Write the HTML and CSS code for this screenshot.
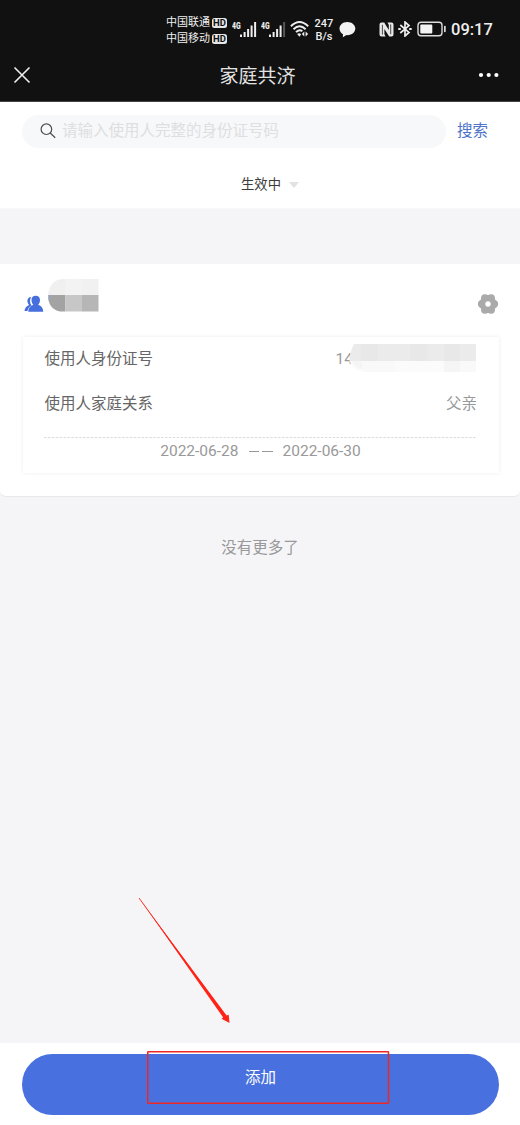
FILE: index.html
```html
<!DOCTYPE html>
<html lang="zh-CN">
<head>
<meta charset="utf-8">
<title>家庭共济</title>
<link rel="stylesheet" href="styles.css">
</head>
<body>
<div class="screen">
  <header class="top">
    <div class="status">
      <div class="carriers">
        <div class="carrier">中国联通<span class="hd">HD</span></div>
        <div class="carrier">中国移动<span class="hd">HD</span></div>
      </div>
      <div class="signal">
        <span class="net"><b>4G</b></span>
        <svg width="17" height="17" viewBox="0 0 17 17" fill="#eee"><rect x="0" y="13.5" width="2" height="2.5"/><rect x="3.6" y="11" width="2" height="5"/><rect x="7.1" y="8" width="2" height="8"/><rect x="10.6" y="4.5" width="2" height="11.5"/><rect x="14.1" y="1" width="2" height="15"/></svg>
      </div>
      <div class="signal second">
        <span class="net"><b>4G</b></span>
        <svg width="17" height="17" viewBox="0 0 17 17" fill="#eee"><rect x="0" y="13.5" width="2" height="2.5"/><rect x="3.6" y="11" width="2" height="5"/><rect x="7.1" y="8" width="2" height="8"/><rect x="10.6" y="4.5" width="2" height="11.5"/><rect x="14.1" y="1" width="2" height="15" fill="#555"/></svg>
      </div>
      <svg class="wifi" width="20" height="18" viewBox="0 0 20 18" fill="none" stroke="#eee" stroke-width="1.9"><path d="M.9 6.2Q9.5-2.2 18.2 6.2M3.5 9.2Q9.5 3.3 15.6 9.2M6 12.2Q9.5 8.7 12.3 11.3"/><path d="M9.500 16.700l-2.400-2.600q2.200-1.700 4 .1z" fill="#eee" stroke="none"/><path d="M14.300 11.600v5l-2.500-2.500zM15.600 11.600v5l2.500-2.500z" fill="#eee" stroke="none"/></svg>
      <div class="speed"><span>247</span><span>B/s</span></div>
      <svg class="bubble" width="17" height="17" viewBox="0 0 17 17" fill="#f2f2f2"><path d="M8.300 1C3.700 1 .5 3.900.5 7.600c0 2.500 1.500 4.600 3.500 5.700L3.800 16.300l3.800-2.200c5 .4 8.700-2.600 8.700-6.500C16.300 3.900 12.900 1 8.300 1z"/></svg>
      <svg class="nfc" width="15" height="15" viewBox="0 0 15 15"><path d="M2.500.5H5.200L9.800 8V3L8.500.5H12.500q2 0 2 2v10q0 2-2 2H10.200L5.400 7V12.200L6.600 14.500H2.500q-2 0-2-2v-10q0-2 2-2z" fill="#e8e8e8"/><path d="M3.400 2.800V12.600M11.700 2.400V12.200" stroke="#222" stroke-width=".8"/></svg>
      <svg class="bt" width="14" height="16" viewBox="0 0 14 16" fill="none" stroke="#eee" stroke-width="1.700"><path d="M2.300 4L11 11.400 7 15V1L11 4.600 2.300 12"/><path d="M.3 8h2.500M11.200 8h2.500" stroke-width="1.900"/></svg>
      <svg class="battery" width="30" height="16" viewBox="0 0 30 16" fill="none"><rect x="1" y="1.200" width="24" height="13.600" rx="3" stroke="#ddd" stroke-width="1.400"/><rect x="3.300" y="3.500" width="12" height="9" rx="1" fill="#f4f4f4"/><rect x="27" y="4.800" width="1.700" height="6.500" rx=".8" fill="#ddd"/></svg>
      <time class="clock">09:17</time>
    </div>
    <div class="nav">
      <svg class="close" width="18" height="18" viewBox="0 0 18 18" stroke="#eee" stroke-width="1.600" fill="none"><path d="M1.500 1.500l15 15M16.500 1.500l-15 15"/></svg>
      <h1 class="title">家庭共济</h1>
      <svg class="more" width="22" height="6" viewBox="0 0 22 6" fill="#fff"><circle cx="3" cy="3" r="2.100"/><circle cx="10.700" cy="3" r="2.100"/><circle cx="18.400" cy="3" r="2.100"/></svg>
    </div>
  </header>
  <section class="filter">
    <div class="search-row">
      <div class="search-box">
        <svg width="16" height="16" viewBox="0 0 16 16" fill="none" stroke="#4c4c4c" stroke-width="1.200"><circle cx="6.400" cy="6.200" r="5.300"/><path d="M10.200 10l5 4.700"/></svg>
        <span>请输入使用人完整的身份证号码</span>
      </div>
      <a class="search-link">搜索</a>
    </div>
    <div class="state">生效中<i class="caret"></i></div>
  </section>
  <main class="content">
    <article class="card">
      <div class="card-head">
        <svg class="people" width="20" height="18" viewBox="0 0 20 18" fill="#456fdd"><path d="M6.800 2C4 2.200 3 4.500 3.500 7c.2 1.200.9 2.200 1.600 3C2.500 11.200.700 12.800.500 16h3C4 13.100 5.400 11.500 7.500 10.400 5.700 7.900 5.400 4.600 7.300 2z"/><path d="M11.700.800c2.800 0 4.500 2 4.300 4.600-.1 1.900-.9 3.300-1.900 4.300 3.300 1.100 5 3.300 5.200 7H4.200c.2-3.700 2-5.900 5.200-7-1.100-1-1.800-2.400-1.900-4.300C7.300 2.800 9 .800 11.700.800z"/></svg>
        <svg class="name-mask" width="52" height="34" viewBox="0 0 52 34"><defs><clipPath id="nm"><path d="M51.500 1v32.500H13Q1 31 1 17 3 1 17 1z"/></clipPath></defs><g clip-path="url(#nm)"><path fill="#f0f0f0" d="M0 1h19v16H0z"/><path fill="#f3f3f3" d="M18.500 1H35v16H18.500z"/><path fill="#f1f1f1" d="M35 1h17v16H35z"/><path fill="#a3a3a3" d="M0 17h18.500v17H0z"/><path fill="#c7c7c7" d="M18.500 17H35v17H18.500z"/><path fill="#b6b6b6" d="M35 17h17v17H35z"/><path fill="#9bb5f3" d="M0 17h2v5H0z"/></g></svg>
        <svg class="gear" width="22" height="20" viewBox="0 0 22 20"><g fill="#aaa"><circle cx="11" cy="10" r="8.600"/><circle cx="5" cy="10" r="4.200"/><circle cx="17" cy="10" r="4.200"/><circle cx="8" cy="4.300" r="4"/><circle cx="14" cy="4.300" r="4"/><circle cx="8" cy="15.700" r="4"/><circle cx="14" cy="15.700" r="4"/></g><circle cx="11" cy="10" r="2.700" fill="#fff"/></svg>
      </div>
      <div class="detail">
        <div class="row"><span>使用人身份证号</span><span class="value id">14<svg class="id-mask" width="128" height="29" viewBox="0 0 128 29"><path d="M5 0h122v28H16Q2 27 0 14z" fill="#fbfbfb"/><path fill="#ebebeb" d="M5 0h122v17H1Q0 10 5 0z"/><path fill="#e8e8e8" d="M12 0h17v17H12zM61 0h17v17H61zM95 0h16v17H95z"/><path fill="#f5f5f5" d="M95 17h16v11H95zM3 17h10v8Q5 24 3 17z"/><path fill="#f9f9f9" d="M13 17h33v11H16l-3-2zM111 17h16v11h-16z"/></svg></span></div>
        <div class="row"><span>使用人家庭关系</span><span class="value">父亲</span></div>
        <svg class="divider" width="433" height="1" viewBox="0 0 433 1"><path d="M0 .5h433" stroke="#dcdcdc" stroke-dasharray="2.600 1.300"/></svg>
        <div class="dates"><span>2022-06-28</span><span class="dash"><i></i><i></i></span><span>2022-06-30</span></div>
      </div>
    </article>
    <p class="end">没有更多了</p>
  </main>
  <footer class="footer"><button class="add">添加</button></footer>
  <svg class="arrow" width="94" height="128" viewBox="0 0 94 128"><path d="M1 1L88.600 118.500 90.700 117.800 91.500 126 83.500 121.800 85.200 120.600z" fill="#ff2416"/><path d="M1 1L87 119" stroke="#ff2416" stroke-width=".9"/></svg>
  <svg class="mark" width="243" height="54" viewBox="0 0 243 54" fill="none" stroke="#ed2824" stroke-width="1.500"><rect x=".75" y=".75" width="240.700" height="51.500" rx=".5"/></svg>
</div>
</body>
</html>
```
FILE: styles.css
```css
* { box-sizing: border-box; }
body { margin: 0; font-family: Roboto, "Noto Sans CJK SC", sans-serif; font-size: 15.5px; color: #666; }
svg { display: block; flex: none; }
.screen { position: relative; width: 520px; height: 1125px; display: flex; flex-direction: column; background: #f5f5f8; overflow: hidden; }

.top { height: 102px; flex: none; background: #111; border-bottom: 1px solid #444; color: #eee; }
.status { height: 50px; padding: 8px 0 0 166px; display: flex; align-items: center; }
.carriers { width: 66px; flex: none; padding-top: 3px; }
.carrier { display: flex; align-items: center; height: 16px; font-size: 11px; line-height: 16px; white-space: nowrap; }
.hd { margin-left: 2px; width: 15px; height: 10px; border-radius: 2.5px; background: #e6e6e6; color: #111; font-size: 9.5px; font-weight: 700; line-height: 10px; text-align: center; }
.signal { display: flex; width: 25px; flex: none; }
.signal.second { margin-left: 4px; }
.net { width: 8px; flex: none; font: 700 9.5px/9px Roboto, sans-serif; }
.net b { display: block; transform: scaleX(.72); transform-origin: 0 0; }
.wifi { margin-left: 4px; }
.speed { margin-left: 4px; width: 20px; display: flex; flex-direction: column; align-items: center; font-size: 11px; font-weight: 500; line-height: 13px; padding-top: 1px; }
.bubble { margin-left: 5px; }
.nfc { margin-left: 23px; }
.bt { margin-left: 4px; }
.battery { margin-left: 5px; }
.clock { margin-left: 4px; padding-top: 2px; font-size: 16.5px; font-weight: 500; line-height: 18px; }
.nav { height: 50px; padding: 0 20px 0 13px; display: flex; align-items: center; justify-content: space-between; }
.title { margin: 0; padding: 4px 0 0 6px; font-size: 19px; font-weight: 400; line-height: 28px; color: #e2e2e2; }

.filter { height: 107px; flex: none; background: #fff; border-bottom: 1px solid #f9f9fa; }
.search-row { display: flex; align-items: center; padding: 13px 0 0 22px; }
.search-box { width: 424px; height: 33px; border-radius: 17px; background: #f7f8fa; display: flex; align-items: center; gap: 6px; padding: 0 0 1px 18px; color: #dedfe0; line-height: 24px; }
.search-link { margin: -1px 0 0 11px; color: #4f74c8; line-height: 24px; }
.state { display: flex; justify-content: center; align-items: center; gap: 8px; padding-left: 20px; margin-top: 27px; font-size: 13.3px; line-height: 20px; color: #3c3c3c; }
.caret { border: 5.5px solid transparent; border-top: 6px solid #e2e2e2; border-bottom: 0; }

.content { flex: 1; padding-top: 55px; }
.card { height: 233px; background: #fff; border-bottom: 1px solid #e8e8ea; border-radius: 0 0 6px 6px; }
.card-head { height: 73px; display: flex; align-items: flex-start; padding: 14px 21px 0 24px; }
.people { margin-top: 17px; }
.name-mask { margin-left: 3px; }
.gear { margin: 16px 0 0 auto; }
.detail { margin: 0 21px 0 23px; height: 136px; padding: 10px 22px 0; box-shadow: 0 0 4px rgba(0,0,0,.08); }
.row { display: flex; justify-content: space-between; height: 45px; line-height: 24px; }
.row > span:first-child { margin-left: -.5px; }
.value { color: #999; }
.value.id { display: flex; }
.id-mask { margin: -3px 0 0 -4px; }
.divider { margin: 0 0 0 -1px; }
.dates { display: flex; justify-content: center; gap: 10px; margin-left: -1px; line-height: 27px; color: #999; font-size: 15.5px; }
.dash { display: flex; align-items: center; gap: 3px; }
.dash i { width: 10.5px; height: 1px; background: #999; }
.end { margin: 39px 0 0; text-align: center; line-height: 24px; color: #999; }

.footer { height: 82px; flex: none; background: #fff; padding: 11px 21px 0 22px; }
.add { display: block; width: 477px; height: 61px; border: 0; border-radius: 31px; padding: 0 0 13px; background: #4870de; color: #fff; font: inherit; line-height: 24px; }

.arrow { position: absolute; left: 138px; top: 897px; }
.mark { position: absolute; left: 147px; top: 1051px; }
```
